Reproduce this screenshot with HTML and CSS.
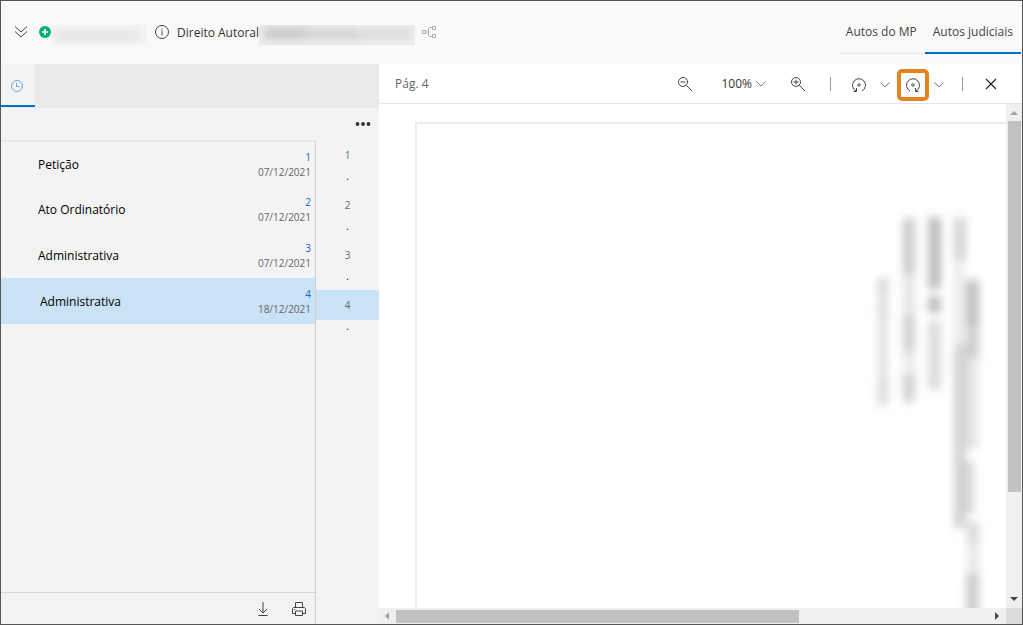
FILE: index.html
```html
<!DOCTYPE html>
<html lang="pt-BR">
<head>
<meta charset="utf-8">
<title>Autos judiciais</title>
<link rel="stylesheet" href="styles.css">
</head>
<body>
<div class="app">
  <header class="header">
    <button class="icon-btn" aria-label="Expandir"><svg width="14" height="14" viewBox="0 0 14 14" fill="none" stroke="#444"><path d="M1 1.500l6 5.500 6-5.500M1 6.500l6 5.500 6-5.500"/></svg></button>
    <svg class="plus" width="12" height="12" viewBox="0 0 12 12"><circle cx="6" cy="6" r="6" fill="#0aae75"/><path d="M6 3v6M3 6h6" stroke="#fff" stroke-width="1.600"/></svg>
    <svg class="redact-number" width="96" height="20" viewBox="0 0 96 20"><rect width="96" height="20" fill="#f5f5f5"/><g class="soft" fill="#e2e2e2"><rect x="5" y="6" width="84" height="9"/></g></svg>
    <button class="icon-btn info" aria-label="Informações"><svg width="14" height="14" viewBox="0 0 14 14" fill="none" stroke="#444"><circle cx="7" cy="7" r="6.500"/><path d="M7 5.800v4.400M7 3.600v1.200"/></svg></button>
    <h1 class="subject">Direito Autoral</h1>
    <svg class="redact-title" width="156" height="20" viewBox="0 0 156 20"><rect width="156" height="20" fill="#eeeeee"/><g class="soft"><rect x="5" y="3" width="42" height="11" fill="#c6c6c6"/><rect x="46" y="4" width="53" height="10" fill="#d0d0d0"/><rect x="98" y="5" width="54" height="8" fill="#d6d6d6"/></g></svg>
    <svg class="tree" width="14" height="12" viewBox="0 0 14 12" fill="none" stroke="#aaa"><path d="M.5 4.500h3v3h-3zM10.500 .5h3v3h-3zM10.500 8.500h3v3h-3zM3.500 6h3M10.500 1.500h-3l-1 1v7l1 1h3"/></svg>
    <nav class="tabs">
      <a class="tab" href="#mp">Autos do MP</a>
      <a class="tab tab-active" href="#judiciais" aria-current="page">Autos judiciais</a>
    </nav>
  </header>
  <main class="main">
    <aside class="side">
      <div class="side-tabs">
        <button class="side-tab" aria-label="Histórico"><svg width="12" height="12" viewBox="0 0 12 12" fill="none" stroke="#68a9dc"><circle cx="6" cy="6" r="5.500"/><path d="M5.500 3v3.500h3"/></svg></button>
      </div>
      <div class="side-actions">
        <button class="icon-btn" aria-label="Mais opções"><svg width="16" height="4" viewBox="0 0 16 4" fill="#333"><circle cx="2.500" cy="2" r="1.900"/><circle cx="8" cy="2" r="1.900"/><circle cx="13.500" cy="2" r="1.900"/></svg></button>
      </div>
      <div class="side-body">
        <section class="docs">
          <ul class="doc-list">
            <li class="doc"><span class="doc-name">Petição</span><span class="doc-meta"><a class="doc-num" href="#p1">1</a><time>07/12/2021</time></span></li>
            <li class="doc"><span class="doc-name">Ato Ordinatório</span><span class="doc-meta"><a class="doc-num" href="#p2">2</a><time>07/12/2021</time></span></li>
            <li class="doc"><span class="doc-name">Administrativa</span><span class="doc-meta"><a class="doc-num" href="#p3">3</a><time>07/12/2021</time></span></li>
            <li class="doc doc-active"><span class="doc-name">Administrativa</span><span class="doc-meta"><a class="doc-num" href="#p4">4</a><time>18/12/2021</time></span></li>
          </ul>
          <footer class="docs-foot">
            <button class="icon-btn" aria-label="Baixar"><svg width="14" height="14" viewBox="0 0 14 14" fill="none" stroke="#444"><path d="M7 0v10.500M3 7l4 4 4-4M2.500 13.500h9"/></svg></button>
            <button class="icon-btn" aria-label="Imprimir"><svg width="14" height="14" viewBox="0 0 14 14" fill="none" stroke="#444"><path d="M3.500 5V.5h7V5M3.500 11.500h-3v-5l1-1h11l1 1v5h-3M3.500 9h7v4.500h-7zM2 7.500h1"/></svg></button>
          </footer>
        </section>
        <ol class="pages">
          <li><a class="page-link page-first" href="#p1">1</a><span class="dot">.</span></li>
          <li><a class="page-link" href="#p2">2</a><span class="dot">.</span></li>
          <li><a class="page-link" href="#p3">3</a><span class="dot">.</span></li>
          <li><a class="page-link page-active" href="#p4">4</a><span class="dot">.</span></li>
        </ol>
      </div>
    </aside>
    <section class="viewer">
      <div class="toolbar">
        <span class="page-label">Pág. 4</span>
        <div class="tools">
          <button class="icon-btn" aria-label="Diminuir zoom"><svg width="16" height="16" viewBox="0 0 16 16" fill="none" stroke="#444"><circle cx="6" cy="6" r="4.500"/><path d="M3.500 6h5M9.300 9.300L15 15"/></svg></button>
          <button class="zoom-level">100%<svg width="10" height="6" viewBox="0 0 10 6" fill="none" stroke="#777"><path d="M.5 .5L5 5 9.500 .5"/></svg></button>
          <button class="icon-btn" aria-label="Aumentar zoom"><svg width="16" height="16" viewBox="0 0 16 16" fill="none" stroke="#444"><circle cx="6" cy="6" r="4.500"/><path d="M3.500 6h5M6 3.500v5M9.300 9.300L15 15"/></svg></button>
          <span class="sep"></span>
          <div class="rotate">
            <button class="rotate-btn" aria-label="Girar à esquerda"><svg width="16" height="16" viewBox="0 0 16 16" fill="none" stroke="#444"><path d="M11 14A6.500 6.500 0 1 0 5 14M5.500 11v3.500H2.500"/><circle cx="8" cy="8" r="1.300" fill="#aaa" stroke="#777"/></svg></button>
            <button class="icon-btn" aria-label="Opções de giro à esquerda"><svg width="10" height="6" viewBox="0 0 10 6" fill="none" stroke="#777"><path d="M.5 .5L5 5 9.500 .5"/></svg></button>
          </div>
          <div class="rotate">
            <button class="rotate-btn rotate-marked" aria-label="Girar à direita"><svg width="16" height="16" viewBox="0 0 16 16" fill="none" stroke="#444"><path d="M5 14A6.500 6.500 0 1 1 11 14M10.500 11v3.500H13.500"/><circle cx="8" cy="8" r="1.300" fill="#aaa" stroke="#777"/></svg></button>
            <button class="icon-btn" aria-label="Opções de giro à direita"><svg width="10" height="6" viewBox="0 0 10 6" fill="none" stroke="#777"><path d="M.5 .5L5 5 9.500 .5"/></svg></button>
          </div>
          <span class="sep"></span>
          <button class="icon-btn close" aria-label="Fechar"><svg width="12" height="12" viewBox="0 0 12 12" fill="none" stroke="#222" stroke-width="1.200"><path d="M1 1l10 10M11 1L1 11"/></svg></button>
        </div>
      </div>
      <div class="canvas">
        <div class="sheet">
          <svg class="scan" width="160" height="406" viewBox="0 0 160 406" aria-label="Texto ilegível">
            <g class="scan-ink" fill="#aaa">
              <g opacity=".48"><rect x="32" y="76" width="10" height="16"/><rect x="32" y="92" width="10" height="112" opacity=".7"/><rect x="32" y="100" width="10" height="18" opacity=".4"/><rect x="32" y="178" width="10" height="24" opacity=".5"/></g>
              <g opacity=".6"><rect x="57" y="16" width="12" height="56"/><rect x="57" y="72" width="12" height="42" opacity=".5"/><rect x="57" y="114" width="12" height="36" opacity=".9"/><rect x="57" y="150" width="12" height="21" opacity=".4"/><rect x="57" y="172" width="12" height="28" opacity=".9"/></g>
              <g opacity=".75"><rect x="82" y="15" width="13" height="72"/><rect x="82" y="94" width="13" height="17"/><rect x="82" y="119" width="13" height="68" opacity=".55"/></g>
              <g opacity=".5"><rect x="108" y="16" width="12" height="42"/><rect x="108" y="58" width="10" height="84" opacity=".45"/><rect x="108" y="142" width="12" height="184"/></g>
              <g opacity=".75"><rect x="120" y="78" width="13" height="45"/><rect x="120" y="122" width="13" height="34" opacity=".75"/><rect x="118" y="155" width="14" height="92" opacity=".4"/><rect x="117" y="260" width="12" height="52" opacity=".5"/><rect x="121" y="320" width="12" height="22" opacity=".55"/><rect x="121" y="342" width="12" height="30" opacity=".35"/><rect x="120" y="372" width="13" height="44" opacity=".8"/></g>
            </g>
          </svg>
        </div>
      </div>
      <div class="vbar"><svg width="8" height="4" viewBox="0 0 8 4"><path d="M0 4l4-4 4 4z" fill="#a3a3a3"/></svg><div class="vtrack"><div class="vthumb"></div></div><svg width="8" height="4" viewBox="0 0 8 4"><path d="M0 0h8L4 4z" fill="#444"/></svg></div>
      <div class="hbar"><svg width="4" height="8" viewBox="0 0 4 8"><path d="M4 0v8L0 4z" fill="#a3a3a3"/></svg><div class="htrack"><div class="hthumb"></div></div><svg width="4" height="8" viewBox="0 0 4 8"><path d="M0 0v8l4-4z" fill="#444"/></svg></div>
      <div class="corner"></div>
    </section>
  </main>
</div>
</body>
</html>
```
FILE: styles.css
```css
* { box-sizing: border-box; }
body { margin: 0; font: 12px/16px "Open Sans", "Noto Sans", sans-serif; color: #333; }
button { border: 0; padding: 0; margin: 0; background: none; font: inherit; color: inherit; }
a { color: inherit; text-decoration: none; }
svg { display: block; flex: none; }
ul, ol { list-style: none; margin: 0; padding: 0; }

.app { display: flex; flex-direction: column; height: 100vh; border: 1px solid #555; background: #f3f3f3; overflow: hidden; }
.icon-btn { display: flex; align-items: center; justify-content: center; }

.header { display: flex; align-items: center; height: 63px; flex: none; padding: 0 1px 2px 13px; background: #f9f9f9; }
.plus { margin-left: 11px; }
.redact-number { margin-top: 6px; }
.info { margin-left: 8px; }
.soft { filter: blur(4px); }
.subject { margin: 0 0 0 8px; padding-top: 2px; font-size: 12px; font-weight: 500; color: #333; white-space: nowrap; }
.redact-title { margin-top: 6px; }
.tree { margin-left: 7px; }
.tabs { display: flex; margin-left: auto; }
.tab { display: flex; align-items: center; height: 44px; padding: 2px 8px 0; border-bottom: 1px solid #e8e8e8; font-size: 12px; color: #444; white-space: nowrap; }
.tab-active { border-bottom: 2px solid #0072c6; }

.main { display: flex; flex: 1; min-height: 0; }
.side { display: flex; flex-direction: column; width: 378px; flex: none; }
.side-tabs { display: flex; height: 44px; background: #eaeaea; }
.side-tab { display: flex; align-items: center; justify-content: center; width: 34px; height: 43px; padding: 2px 2px 0 0; background: #f3f3f3; border-bottom: 2px solid #0072c6; }
.side-actions { display: flex; align-items: center; justify-content: flex-end; height: 32px; padding-right: 8px; }
.side-body { display: flex; flex: 1; min-height: 0; }
.docs { display: flex; flex-direction: column; flex: 1; border-right: 1px solid #d0d0d0; border-top: 2px solid #e8e8e8; }
.doc-list { flex: 1; }
.doc { display: flex; align-items: center; justify-content: space-between; height: 46px; padding: 2px 4px 0 37px; }
.doc:first-child { height: 44px; }
.doc-active { padding-left: 39px; background: #cae2f6; }
.doc-name { font-size: 12px; font-weight: 500; color: #000; }
.doc-meta { display: flex; flex-direction: column; align-items: flex-end; font-size: 10px; line-height: 15px; color: #666; }
.doc-num { color: #0a66c2; }
.docs-foot { display: flex; align-items: center; justify-content: flex-end; gap: 22px; height: 32px; padding-right: 9px; border-top: 1px solid #d6d6d6; }
.pages { width: 63px; font-size: 10px; text-align: center; color: #666; }
.page-link { display: block; line-height: 30px; }
.page-first { color: #46749c; }
.page-active { background: #cae2f6; }
.dot { display: block; height: 20px; line-height: 12px; color: #111; }

.viewer { display: grid; flex: 1; min-width: 0; grid-template: 40px 1fr 16px / 1fr 16px; background: #fff; }
.toolbar { grid-column: 1 / 3; display: flex; align-items: center; justify-content: space-between; padding: 0 25px 0 16px; border-bottom: 1px solid #e6e6e6; }
.page-label { font-size: 12px; color: #666; }
.tools { display: flex; align-items: center; }
.zoom-level { display: flex; align-items: center; gap: 4px; margin: 0 24px 0 28px; font-size: 12px; }
.sep { width: 1px; height: 14px; margin: 0 12px 0 24px; background: #999; }
.rotate { display: flex; align-items: center; padding-top: 2px; }
.rotate + .rotate { margin-left: 7px; }
.rotate-btn { display: flex; align-items: center; justify-content: center; width: 32px; height: 32px; border: 4px solid transparent; border-radius: 5px; margin-right: 5px; }
.rotate-marked { border-color: #e8821e; }
.rotate + .sep { margin: 0 22px 0 18px; }

.canvas { overflow: hidden; padding: 18px 0 0 36px; }
.sheet { display: flex; justify-content: flex-end; height: 100%; border: solid #ededed; border-width: 2px 0 0 2px; overflow: hidden; padding-top: 78px; }
.scan-ink { filter: blur(4px); }

.vbar { display: flex; flex-direction: column; align-items: center; padding: 7px 0; background: #f0f0f0; }
.vtrack { flex: 1; width: 13px; margin: 6px 0; }
.vthumb { height: 79%; background: #c1c1c1; }
.hbar { display: flex; align-items: center; padding: 0 7px 0 6px; background: #f0f0f0; }
.htrack { flex: 1; height: 13px; margin: 0 7px; }
.hthumb { height: 100%; width: 68%; background: #c1c1c1; }
.corner { background: #dcdcdc; }
```
